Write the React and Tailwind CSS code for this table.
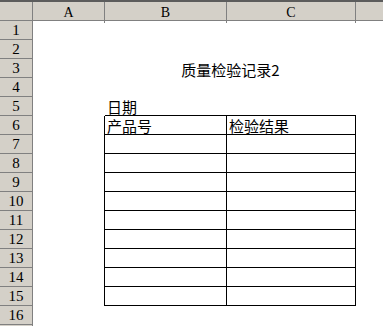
const COLS = 'grid grid-cols-[33px_72px_122px_129px_1fr]';
const CJK = "font-['Noto_Sans_CJK_SC',sans-serif]";
const NUM = "font-['Liberation_Serif',serif]";

// rows 6..15 hold the bordered record table
const TABLE_FIRST = 6;
const TABLE_LAST = 15;

const CELLS = {
  3: { span: 'B:C', text: '质量检验记录2' },
  5: { B: '日期' },
  6: { B: '产品号', C: '检验结果' },
};

const HeaderRow = () => (
  <>
    <div className="h-[2px] bg-[#5c5c5c]" />
    <div className={`${COLS} h-[19px] bg-[#d4d0c8] border-b border-[#808080]`}>
      <div className="border-r border-[#808080]" />
      {['A', 'B', 'C'].map((c) => (
        <div key={c} className={`border-r border-[#808080] flex items-center justify-center text-[14px] text-black ${NUM}`}>
          {c}
        </div>
      ))}
      <div />
    </div>
  </>
);

const Row = ({ n, label = true }) => {
  const inTable = n >= TABLE_FIRST && n <= TABLE_LAST;
  const aboveTable = n === TABLE_FIRST - 1;
  const cells = CELLS[n] || {};
  const edge = inTable ? 'border-r border-b border-black' : aboveTable ? 'border-b border-black' : '';

  return (
    <div className={`${COLS} h-[19px]`}>
      <div className={`bg-[#d4d0c8] border-r border-b border-[#808080] flex items-center justify-center text-[15px] leading-none text-black ${NUM}`}>
        {label ? n : null}
      </div>
      <div className={inTable ? 'border-r border-black' : ''} />
      {cells.span ? (
        <div className={`col-span-2 flex items-end justify-center pb-[1px] text-[15px] leading-none text-black ${CJK}`}>
          {cells.text}
        </div>
      ) : (
        <>
          <div className={`${edge} flex items-end pl-[2px] pb-[1px] text-[15px] leading-none text-black ${CJK}`}>
            {cells.B}
          </div>
          <div className={`${edge} flex items-end pl-[2px] pb-[1px] text-[15px] leading-none text-black ${CJK}`}>
            {cells.C}
          </div>
        </>
      )}
      <div />
    </div>
  );
};

export default function App() {
  const rows = Array.from({ length: 16 }, (_, i) => i + 1);
  return (
    <div className="w-[383px] h-[326px] overflow-hidden bg-white">
      <HeaderRow />
      {rows.map((n) => (
        <Row key={n} n={n} />
      ))}
      {/* next row only peeks in at the bottom edge */}
      <Row n={17} label={false} />
    </div>
  );
}
